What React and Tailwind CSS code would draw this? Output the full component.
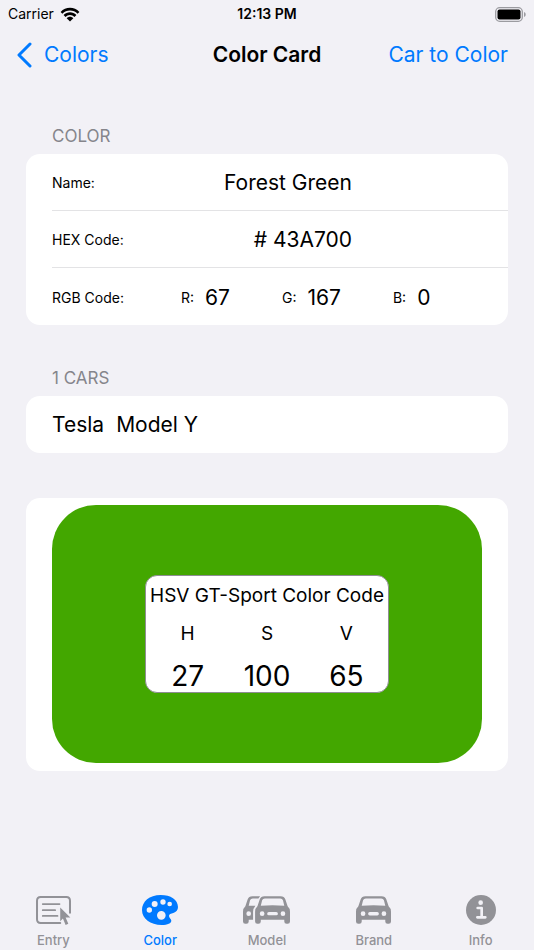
import { useState } from 'react'

function WifiIcon() {
  return (
    <svg viewBox="0 0 20 15" className="h-[15px] w-5" aria-hidden="true">
      <path d="M0.6 4.9C3.2 2.2 6.5 0.8 10 0.8s6.8 1.4 9.4 4.1l-1.8 1.9C15.5 4.6 12.9 3.5 10 3.5S4.5 4.6 2.4 6.8z" />
      <path d="M3.6 8C5.4 6.2 7.6 5.2 10 5.2s4.6 1 6.4 2.8l-1.9 1.9C13.2 8.6 11.7 7.9 10 7.9s-3.2 0.7-4.5 2z" />
      <path d="M6.7 11.2C7.6 10.2 8.7 9.7 10 9.7s2.4 0.5 3.3 1.5L10 14.6z" />
    </svg>
  )
}

function BatteryIcon() {
  return (
    <svg viewBox="0 0 31 15" className="h-[15px] w-[31px]" aria-hidden="true">
      <rect x="0.7" y="0.7" width="26.6" height="13.6" rx="4" fill="none" stroke="#9b9ba0" strokeWidth="1.3" />
      <rect x="2.5" y="2.5" width="23" height="10" rx="2" />
      <path d="M29 5c1.2 0.5 1.7 1.4 1.7 2.5S30.2 9.5 29 10z" fill="#9b9ba0" />
    </svg>
  )
}

function EntryIcon() {
  return (
    <svg viewBox="0 0 104 86" className="h-[29px] w-[35px]" fill="none" stroke="currentColor" strokeLinecap="round" aria-hidden="true">
      <path d="M72 80H14Q3 80 3 69V14Q3 3 14 3H90Q101 3 101 14V50" strokeWidth="6" />
      <path d="M20 24H70M20 42H57M20 59H64" strokeWidth="5" />
      <path d="M72 34V75L80 67L88 86L96 82L88 64H102Z" fill="currentColor" stroke="none" />
    </svg>
  )
}

function PaletteIcon() {
  return (
    <svg viewBox="0 0 108 90" className="h-[30px] w-9" fill="currentColor" aria-hidden="true">
      <path
        fillRule="evenodd"
        d="M56 0C22 0 0 20 0 45C0 71 25 90 59 90C77 90 88 84 88 77C88 72 81 69 81 63C81 57 87 56 94 54C103 51 108 45 108 36C108 14 86 0 56 0Z
          M14 45a8 8 0 1 0 16 0a8 8 0 1 0 -16 0Z
          M29 27a9 9 0 1 0 18 0a9 9 0 1 0 -18 0Z
          M55 21a8 8 0 1 0 16 0a8 8 0 1 0 -16 0Z
          M76 27a7 7 0 1 0 14 0a7 7 0 1 0 -14 0Z
          M45 61a13 13 0 1 0 26 0a13 13 0 1 0 -26 0Z"
      />
    </svg>
  )
}

const CAR_PATH = `M28 0H76Q87 0 90 9L97 30Q104 36 104 46V75Q104 82 97 82H94Q87 82 87 75V70H17V75Q17 82 10 82H7Q0 82 0 75V46Q0 36 7 30L14 9Q17 0 28 0Z
  M29 7Q23 7 21 12L17 28Q52 26 87 28L83 12Q81 7 75 7Z
  M14 52a7 7 0 1 0 14 0a7 7 0 1 0 -14 0Z
  M76 52a7 7 0 1 0 14 0a7 7 0 1 0 -14 0Z
  M41 47Q36 47 36 52Q36 57 41 57H63Q68 57 68 52Q68 47 63 47Z`

function CarIcon() {
  return (
    <svg viewBox="0 0 104 82" className="h-7 w-[35px]" fill="currentColor" aria-hidden="true">
      <path fillRule="evenodd" d={CAR_PATH} />
    </svg>
  )
}

function CarsIcon() {
  return (
    <svg viewBox="0 0 140 82" className="h-7 w-[47px]" fill="currentColor" aria-hidden="true">
      <path
        fillRule="evenodd"
        d="M51 0H28Q17 0 14 9L7 30Q0 36 0 46V75Q0 82 7 82H10Q17 82 17 75V70H30V46Q30 36 37 28H17L21 12Q23 7 29 7H46Z
          M10 52a7 7 0 1 0 14 0a7 7 0 1 0 -14 0Z"
      />
      <path fillRule="evenodd" transform="translate(36 0)" d={CAR_PATH} />
    </svg>
  )
}

function InfoIcon() {
  return (
    <svg viewBox="0 0 90 90" className="h-[30px] w-[30px]" aria-hidden="true">
      <circle cx="45" cy="45" r="45" fill="currentColor" />
      <circle cx="44" cy="23" r="7" fill="#f2f1f6" />
      <path d="M35 39H47V66M34 67H58" fill="none" stroke="#f2f1f6" strokeWidth="8" strokeLinecap="round" strokeLinejoin="round" />
    </svg>
  )
}

const TABS = [
  { name: 'Entry', Icon: EntryIcon },
  { name: 'Color', Icon: PaletteIcon },
  { name: 'Model', Icon: CarsIcon },
  { name: 'Brand', Icon: CarIcon },
  { name: 'Info', Icon: InfoIcon },
]

const RGB = [['R', 67], ['G', 167], ['B', 0]]
const HSV = [['H', 27], ['S', 100], ['V', 65]]

function Row({ label, children }) {
  return (
    <div className="flex h-[57px] items-center pt-0.5">
      <dt className="w-[129px] shrink-0 text-sm">{label}</dt>
      {children}
    </div>
  )
}

export default function App() {
  const [tab, setTab] = useState('Color')

  return (
    <div className="flex min-h-screen flex-col bg-[#f2f1f6] font-['Inter',sans-serif] text-black">
      {/* Status bar */}
      <div className="grid h-7 grid-cols-3 items-center px-2 text-sm">
        <div className="flex items-center gap-1.5">
          Carrier
          <WifiIcon />
        </div>
        <div className="text-center font-semibold">12:13 PM</div>
        <div className="flex justify-end">
          <BatteryIcon />
        </div>
      </div>

      <header className="grid h-[54px] grid-cols-[1fr_auto_1fr] items-center px-4 text-[21px]">
        <a href="#colors" className="flex items-center gap-3 text-[#007aff]">
          <svg viewBox="0 0 16 26" className="h-[26px] w-4" fill="none" stroke="currentColor" strokeWidth="3" strokeLinecap="round" strokeLinejoin="round" aria-hidden="true">
            <path d="M14 2L3 13L14 24" />
          </svg>
          Colors
        </a>
        <h1 className="font-semibold">Color Card</h1>
        <a href="#car-to-color" className="pr-2.5 text-right text-[#007aff]">Car to Color</a>
      </header>

      <main className="flex-1 px-[26px] pt-[42px]">
        <h2 className="px-[26px] text-[17px] leading-6 text-[#85858b]">COLOR</h2>
        <dl className="mt-1.5 divide-y divide-[#e3e3e5] rounded-[14px] bg-white pl-[26px]">
          <Row label="Name:">
            <dd className="w-[171px] text-right text-[21px]">Forest Green</dd>
          </Row>
          <Row label="HEX Code:">
            <dd className="w-[171px] text-right text-[21px]"># 43A700</dd>
          </Row>
          <Row label="RGB Code:">
            <dd className="flex gap-[52px]">
              {RGB.map(([name, value]) => (
                <span key={name} className="flex items-center gap-[11px]">
                  <span className="text-sm">{name}:</span>
                  <span className="text-[21px]">{value}</span>
                </span>
              ))}
            </dd>
          </Row>
        </dl>

        <h2 className="mt-[41px] px-[26px] text-[17px] leading-6 text-[#85858b]">1 CARS</h2>
        <ul className="mt-1.5 rounded-[14px] bg-white px-[26px]">
          <li className="flex h-[57px] items-center gap-3 text-[21px]">
            <span>Tesla</span>
            <span>Model Y</span>
          </li>
        </ul>

        <section className="mt-[45px] rounded-[14px] bg-white px-[26px] pt-[7px] pb-2">
          <div className="flex h-[258px] items-center justify-center rounded-[44px] bg-[#43a700]">
            <div className="w-[244px] rounded-xl border border-[#8e8e93] bg-white text-center">
              <h3 className="pt-1.5 text-[19px] leading-7 whitespace-nowrap">HSV GT-Sport Color Code</h3>
              <dl className="grid grid-cols-3 px-0.5">
                {HSV.map(([name, value]) => (
                  <div key={name}>
                    <dt className="pt-2 text-[19px] leading-8">{name}</dt>
                    <dd className="pt-2.5 text-[28px] leading-8">{value}</dd>
                  </div>
                ))}
              </dl>
            </div>
          </div>
        </section>
      </main>

      <nav className="grid grid-cols-5 pb-0.5">
        {TABS.map(({ name, Icon }) => (
          <button
            key={name}
            type="button"
            onClick={() => setTab(name)}
            aria-current={tab === name ? 'page' : undefined}
            className={`flex flex-col items-center gap-1.5 text-[13px] leading-4 font-medium ${tab === name ? 'text-[#007aff]' : 'text-[#929297]'}`}
          >
            <span className="flex h-8 items-center">
              <Icon />
            </span>
            {name}
          </button>
        ))}
      </nav>
    </div>
  )
}
